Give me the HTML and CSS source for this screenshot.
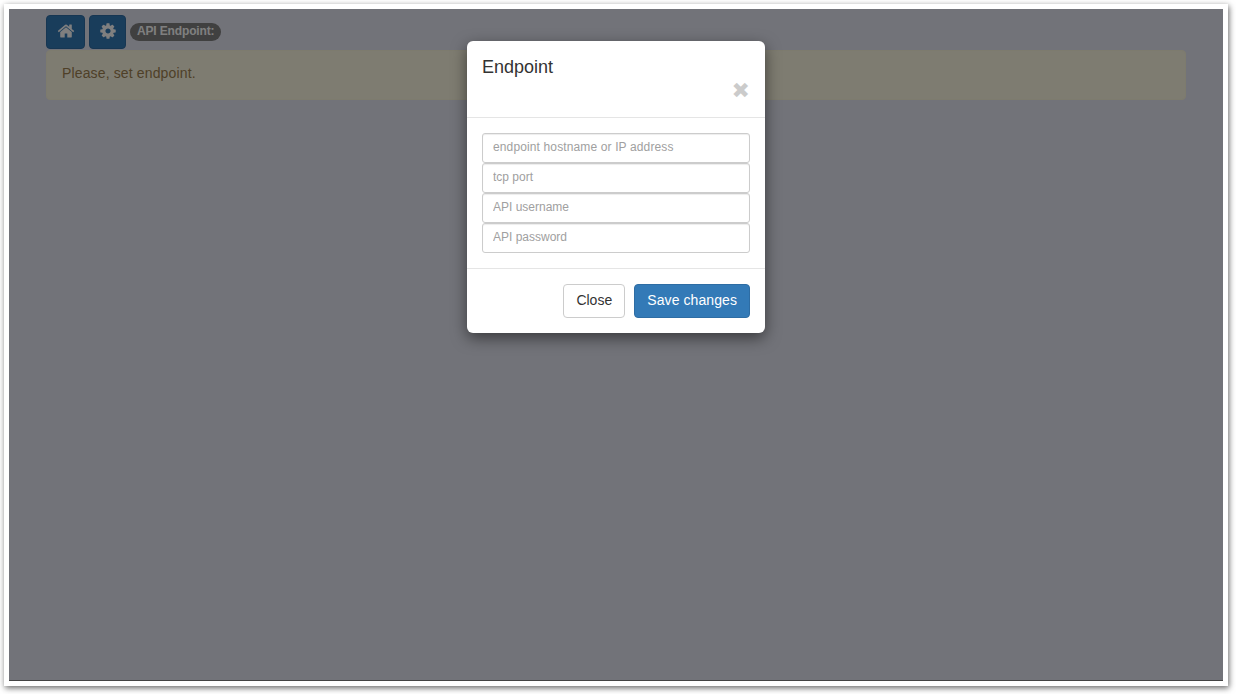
FILE: index.html
```html
<!DOCTYPE html>
<html lang="en">
<head>
<meta charset="utf-8">
<title>Endpoint</title>
<link rel="stylesheet" href="styles.css">
</head>
<body>
<div class="window">
  <div class="page">
    <div class="container">
      <div class="toolbar">
        <button class="icon-btn home-btn" type="button">
          <svg class="icon" width="18" height="18" viewBox="0 0 1792 1792" aria-hidden="true"><path d="M1472 992v480q0 26-19 45t-45 19h-384v-384h-256v384h-384q-26 0-45-19t-19-45v-480q0-1 .5-3t.5-3l575-474 575 474q1 2 1 6zm223-69l-62 74q-8 9-21 11h-3q-13 0-21-7l-692-577-692 577q-12 8-24 7-13-2-21-11l-62-74q-8-10-7-23.500t11-21.500l719-599q32-26 76-26t76 26l244 204v-195q0-14 9-23t23-9h192q14 0 23 9t9 23v408l219 182q10 8 11 21.500t-7 23.500z"/></svg>
        </button>
        <button class="icon-btn gear-btn" type="button">
          <svg class="icon" width="18" height="18" viewBox="0 0 1792 1792" aria-hidden="true"><path d="M1152 896q0-106-75-181t-181-75-181 75-75 181 75 181 181 75 181-75 75-181zm512-109v222q0 12-8 23t-20 13l-185 28q-19 54-39 91 35 50 107 138 10 12 10 25t-9 23q-27 37-99 108t-94 71q-12 0-26-9l-138-108q-44 23-91 38-16 136-29 186-7 28-36 28h-222q-14 0-24.500-8.500t-11.500-21.500l-28-184q-49-16-90-37l-141 107q-10 9-25 9-14 0-25-11-126-114-165-168-7-10-7-23 0-12 8-23 15-21 51-66.500t54-70.500q-27-50-41-99l-183-27q-13-2-21-12.500t-8-23.500v-222q0-12 8-23t19-13l186-28q14-46 39-92-40-57-107-138-10-12-10-24 0-10 9-23 26-36 98.500-107.500t94.500-71.500q13 0 26 10l138 107q44-23 91-38 16-136 29-186 7-28 36-28h222q14 0 24.500 8.500t11.500 21.500l28 184q49 16 90 37l142-107q9-9 24-9 13 0 25 10 129 119 165 170 7 8 7 22 0 12-8 23-15 21-51 66.500t-54 70.500q26 50 41 98l183 28q13 2 21 12.500t8 23.500z"/></svg>
        </button>
        <span class="pill">API Endpoint:</span>
      </div>
      <div class="alert">Please, set endpoint.</div>
    </div>
    <div class="backdrop">
      <div class="modal">
        <div class="modal-header">
          <h4 class="modal-title">Endpoint</h4>
          <div class="close-row"><button class="close" type="button">✖</button></div>
        </div>
        <div class="modal-body">
          <input class="field field-long" type="text" placeholder="endpoint hostname or IP address">
          <input class="field" type="text" placeholder="tcp port">
          <input class="field" type="text" placeholder="API username">
          <input class="field" type="password" placeholder="API password">
        </div>
        <div class="modal-footer">
          <button class="btn btn-default" type="button">Close</button>
          <button class="btn btn-primary" type="button">Save changes</button>
        </div>
      </div>
    </div>
  </div>
</div>
</body>
</html>
```
FILE: styles.css
```css
* { box-sizing: border-box; }
html, body { margin: 0; height: 100%; }
body {
  background: #fff;
  padding: 4px 8px 8px 4px;
  font-family: "Liberation Sans", Arial, sans-serif;
  font-size: 14px;
  line-height: 20px;
  color: #333;
  overflow: hidden;
}
.window {
  height: 682px;
  padding: 5px;
  background: #fff;
  box-shadow: 1px 2px 6px rgba(0, 0, 0, 0.6);
}
.page {
  position: relative;
  height: 672px;
  background: #e5e6f3;
  border-bottom: 1px solid #444;
}
.container { padding: 6px 37px 0; }
.toolbar { display: flex; align-items: flex-start; height: 35px; }
.icon-btn {
  display: flex;
  align-items: center;
  justify-content: center;
  height: 34px;
  padding: 0 0 2px;
  border: 1px solid #2e6da4;
  border-radius: 4px;
  background: #337ab7;
  margin-right: 4px;
}
.home-btn { width: 39px; }
.gear-btn { width: 37px; }
.icon { fill: #fff; display: block; }
.pill {
  display: inline-block;
  height: 18px;
  margin-top: 8px;
  padding: 0 7px;
  border-radius: 10px;
  background: #808080;
  color: #fff;
  font-size: 12px;
  font-weight: bold;
  line-height: 17px;
  letter-spacing: -0.15px;
  white-space: nowrap;
}
.alert {
  height: 50px;
  padding: 12px 15px;
  border: 1px solid #fbf6dc;
  border-radius: 4px;
  background: #fcf8e3;
  color: #9e8150;
  letter-spacing: 0.14px;
}
.backdrop {
  position: absolute;
  inset: 0;
  display: flex;
  justify-content: center;
  align-items: flex-start;
  padding-top: 32px;
  background: rgba(0, 0, 0, 0.5);
}
.modal {
  width: 298px;
  background: #fff;
  border-radius: 6px;
  box-shadow: 0 5px 15px rgba(0, 0, 0, 0.5);
}
.modal-header {
  height: 77px;
  padding: 16px 15px 0;
  border-bottom: 1px solid #e5e5e5;
}
.modal-title {
  margin: 0;
  font-size: 18px;
  font-weight: 500;
  line-height: 21px;
  color: #333;
}
.close-row { display: flex; justify-content: flex-end; padding-top: 1px; }
.close {
  padding: 0;
  border: 0;
  background: none;
  font-family: "DejaVu Sans", sans-serif;
  font-size: 22px;
  font-weight: bold;
  line-height: 24px;
  color: #000;
  opacity: 0.2;
}
.modal-body {
  display: flex;
  flex-direction: column;
  padding: 15px;
  height: 150px;
}
.field {
  display: block;
  width: 100%;
  height: 30px;
  padding: 4px 10px 6px;
  border: 1px solid #ccc;
  border-radius: 3px;
  background: #fff;
  box-shadow: inset 0 1px 1px rgba(0, 0, 0, 0.075);
  font-family: inherit;
  font-size: 12px;
  line-height: 18px;
  color: #555;
}
.field-long { letter-spacing: 0.13px; }
.field::placeholder { color: #a0a0a0; opacity: 1; }
.modal-footer {
  display: flex;
  justify-content: flex-end;
  gap: 9px;
  height: 65px;
  padding: 15px;
  border-top: 1px solid #e5e5e5;
}
.btn {
  height: 34px;
  padding: 5px 12px 7px;
  border: 1px solid;
  border-radius: 4px;
  font-family: inherit;
  font-size: 14px;
  line-height: 20px;
}
.btn-default { width: 62px; background: #fff; border-color: #ccc; color: #333; }
.btn-primary { background: #337ab7; border-color: #2e6da4; color: #fff; letter-spacing: 0.08px; }
```
